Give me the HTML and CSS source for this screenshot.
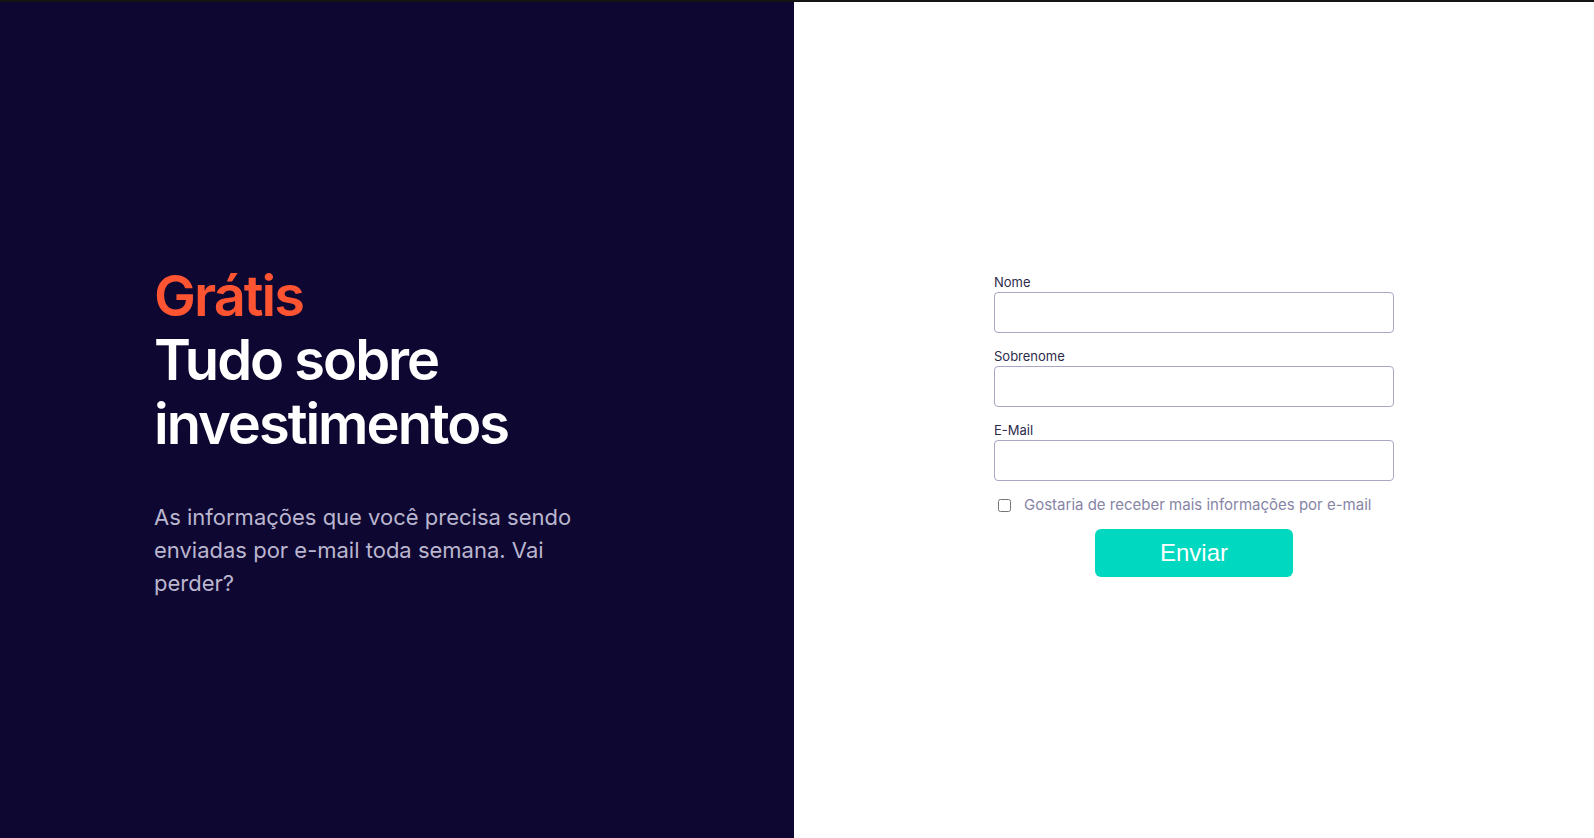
FILE: index.html
```html
<!DOCTYPE html>
<html lang="pt-BR">
<head>
<meta charset="utf-8">
<title>Grátis - Tudo sobre investimentos</title>
<link rel="stylesheet" href="styles.css">
</head>
<body>
<div class="topbar"></div>
<main class="page">
  <section class="hero">
    <div class="hero-inner">
      <h1 class="title"><span class="accent">Grátis</span><br>Tudo sobre investimentos</h1>
      <p class="lead">As informações que você precisa sendo enviadas por e-mail toda semana. Vai perder?</p>
    </div>
  </section>
  <section class="side">
    <form class="form">
      <label class="field-label" for="nome">Nome</label>
      <input class="field" id="nome" type="text">
      <label class="field-label" for="sobrenome">Sobrenome</label>
      <input class="field" id="sobrenome" type="text">
      <label class="field-label" for="email">E-Mail</label>
      <input class="field" id="email" type="email">
      <label class="check">
        <input type="checkbox" class="check-box">
        <span class="check-text">Gostaria de receber mais informações por e-mail</span>
      </label>
      <button type="button" class="submit">Enviar</button>
    </form>
  </section>
</main>
</body>
</html>
```

FILE: styles.css
```css
* { box-sizing: border-box; }
html, body { margin: 0; padding: 0; }
body {
  font-family: Inter, "Noto Sans", sans-serif;
  background: #ffffff;
  height: 838px;
  overflow: hidden;
}
.topbar {
  height: 2px;
  background: #141414;
}
.page {
  display: flex;
  height: 836px;
}
.hero {
  width: 794px;
  flex: 0 0 794px;
  background: #0e0731;
  padding: 262px 0 0 154px;
}
.hero-inner {
  max-width: 440px;
}
.title {
  margin: 0;
  font-size: 56px;
  line-height: 64px;
  font-weight: 600;
  color: #ffffff;
  letter-spacing: -2px;
}
.accent {
  color: #fe5432;
}
.lead {
  margin: 45px 0 0;
  font-size: 22px;
  line-height: 33px;
  color: #bab6cf;
  font-weight: 400;
}
.side {
  flex: 1;
  display: flex;
  justify-content: center;
  padding-top: 272px;
}
.form {
  width: 400px;
  display: flex;
  flex-direction: column;
}
.field-label {
  display: block;
  font-size: 13px;
  line-height: 16px;
  color: #2d2b4c;
  margin-bottom: 2px;
}
.field {
  display: block;
  width: 100%;
  height: 41px;
  border: 1px solid #aaa6c3;
  border-radius: 4px;
  background: #fff;
  margin: 0 0 15px;
  padding: 0 10px;
  font-family: inherit;
  font-size: 15px;
}
.check {
  display: flex;
  align-items: center;
  margin-top: -1px;
  height: 20px;
  font-size: 15px;
  line-height: 20px;
  color: #8784a6;
}
.check-box {
  width: 13px;
  height: 13px;
  margin: 3px 3px 3px 4px;
}
.check-text {
  margin-left: 10px;
}
.submit {
  align-self: center;
  margin-top: 14px;
  width: 198px;
  height: 48px;
  border: none;
  border-radius: 6px;
  background: #00d8bf;
  color: #ffffff;
  font-family: "Liberation Sans", Arial, sans-serif;
  font-size: 24px;
  cursor: pointer;
}
```
